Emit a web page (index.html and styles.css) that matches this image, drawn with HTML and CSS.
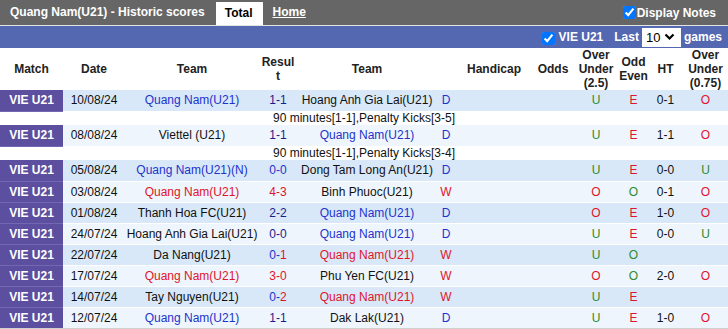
FILE: index.html
```html
<!DOCTYPE html>
<html>
<head>
<meta charset="utf-8">
<link rel="stylesheet" href="styles.css">
</head>
<body>
<div class="page">
  <div class="topbar">
    <div class="title">Quang Nam(U21) - Historic scores</div>
    <div class="tab active">Total</div>
    <a class="tab link">Home</a>
    <label class="notes"><input class="cb" type="checkbox" checked>Display Notes</label>
  </div>
  <div class="filterbar">
    <label class="league"><input class="cb" type="checkbox" checked>VIE U21</label>
    <span class="last">Last</span>
    <span class="select">10<svg class="chev" width="11" height="8" viewBox="0 0 11 8"><path d="M1.5 1.5 L5.5 5.5 L9.5 1.5" fill="none" stroke="#000" stroke-width="2.2"/></svg></span>
    <span class="games">games</span>
  </div>
  <table class="scores">
    <colgroup>
      <col class="c-match"><col class="c-date"><col class="c-team"><col class="c-res"><col class="c-team2"><col class="c-wdl"><col class="c-hc"><col class="c-odds"><col class="c-ou"><col class="c-oe"><col class="c-ht"><col class="c-ou2">
    </colgroup>
    <thead>
      <tr>
        <th>Match</th><th>Date</th><th>Team</th><th class="brk">Result</th><th>Team</th><th></th><th>Handicap</th><th>Odds</th><th>Over Under (2.5)</th><th>Odd Even</th><th>HT</th><th>Over Under (0.75)</th>
      </tr>
    </thead>
    <tbody>
      <tr class="r a">
        <td class="lg">VIE U21</td><td>10/08/24</td><td class="bl">Quang Nam(U21)</td><td class="dk">1-1</td><td>Hoang Anh Gia Lai(U21)</td><td class="bl">D</td><td></td><td></td><td class="gr">U</td><td class="rd">E</td><td>0-1</td><td class="rd">O</td>
      </tr>
      <tr class="note"><td colspan="12">90 minutes[1-1],Penalty Kicks[3-5]</td></tr>
      <tr class="r b">
        <td class="lg">VIE U21</td><td>08/08/24</td><td>Viettel (U21)</td><td class="dk">1-1</td><td class="bl">Quang Nam(U21)</td><td class="bl">D</td><td></td><td></td><td class="gr">U</td><td class="rd">E</td><td>1-1</td><td class="rd">O</td>
      </tr>
      <tr class="note"><td colspan="12">90 minutes[1-1],Penalty Kicks[3-4]</td></tr>
      <tr class="r a">
        <td class="lg">VIE U21</td><td>05/08/24</td><td class="bl">Quang Nam(U21)(N)</td><td class="bl">0-0</td><td>Dong Tam Long An(U21)</td><td class="bl">D</td><td></td><td></td><td class="gr">U</td><td class="rd">E</td><td>0-0</td><td class="gr">U</td>
      </tr>
      <tr class="r b">
        <td class="lg">VIE U21</td><td>03/08/24</td><td class="rd">Quang Nam(U21)</td><td class="rd">4-3</td><td>Binh Phuoc(U21)</td><td class="rd">W</td><td></td><td></td><td class="rd">O</td><td class="gr">O</td><td>0-1</td><td class="rd">O</td>
      </tr>
      <tr class="r a">
        <td class="lg">VIE U21</td><td>01/08/24</td><td>Thanh Hoa FC(U21)</td><td class="dk">2-2</td><td class="bl">Quang Nam(U21)</td><td class="bl">D</td><td></td><td></td><td class="rd">O</td><td class="rd">E</td><td>1-0</td><td class="rd">O</td>
      </tr>
      <tr class="r b">
        <td class="lg">VIE U21</td><td>24/07/24</td><td>Hoang Anh Gia Lai(U21)</td><td class="dk">0-0</td><td class="bl">Quang Nam(U21)</td><td class="bl">D</td><td></td><td></td><td class="gr">U</td><td class="rd">E</td><td>0-0</td><td class="gr">U</td>
      </tr>
      <tr class="r a">
        <td class="lg">VIE U21</td><td>22/07/24</td><td>Da Nang(U21)</td><td class="bl">0-<span class="rd">1</span></td><td class="rd">Quang Nam(U21)</td><td class="rd">W</td><td></td><td></td><td class="gr">U</td><td class="gr">O</td><td></td><td></td>
      </tr>
      <tr class="r b">
        <td class="lg">VIE U21</td><td>17/07/24</td><td class="rd">Quang Nam(U21)</td><td class="rd">3-0</td><td>Phu Yen FC(U21)</td><td class="rd">W</td><td></td><td></td><td class="rd">O</td><td class="gr">O</td><td>2-0</td><td class="rd">O</td>
      </tr>
      <tr class="r a">
        <td class="lg">VIE U21</td><td>14/07/24</td><td>Tay Nguyen(U21)</td><td class="bl">0-<span class="rd">2</span></td><td class="rd">Quang Nam(U21)</td><td class="rd">W</td><td></td><td></td><td class="gr">U</td><td class="rd">E</td><td></td><td></td>
      </tr>
      <tr class="r b last">
        <td class="lg">VIE U21</td><td>12/07/24</td><td class="bl">Quang Nam(U21)</td><td class="dk">1-1</td><td>Dak Lak(U21)</td><td class="bl">D</td><td></td><td></td><td class="gr">U</td><td class="rd">E</td><td>1-0</td><td class="rd">O</td>
      </tr>
    </tbody>
  </table>
</div>
</body>
</html>
```

FILE: styles.css
```css
* { box-sizing: border-box; }
html, body { margin: 0; padding: 0; background: #fff; }
body {
  font-family: "Liberation Sans", Arial, sans-serif;
  font-size: 12px;
  color: #111;
}
.page { width: 728px; }

.topbar {
  height: 26px;
  background: #666;
  border-bottom: 1px solid #e4e4e4;
  display: flex;
  align-items: stretch;
}
.title {
  color: #fff;
  font-weight: bold;
  padding-left: 10px;
  line-height: 25px;
}
.tab {
  font-weight: bold;
  line-height: 23px;
}
.tab.active {
  margin-left: 11px;
  margin-top: 2px;
  padding: 0 10px 0 9px;
  background: #fff;
  color: #000;
}
.tab.link {
  color: #fff;
  text-decoration: underline;
  padding: 0 10px;
  line-height: 25px;
}
.notes {
  margin-left: auto;
  padding-right: 12px;
  display: flex;
  align-items: center;
  color: #fff;
  font-weight: bold;
}
.cb {
  width: 13px;
  height: 13px;
  margin: 0 1px 0 0;
  accent-color: #0075ff;
}

.filterbar {
  height: 22px;
  background: #5467b1;
  display: flex;
  align-items: center;
  justify-content: flex-end;
  padding-right: 6px;
  color: #fff;
  font-weight: bold;
}
.league { display: flex; align-items: center; }
.league .cb { margin-right: 4px; margin-top: 2px; }
.last { margin-left: 11px; }
.select {
  margin-left: 3px;
  width: 39px;
  height: 19px;
  background: #fff;
  color: #000;
  font-weight: normal;
  font-size: 13px;
  display: flex;
  align-items: center;
  padding-left: 4px;
  gap: 4px;
}
.chev { display: block; }
.games { margin-left: 3px; }

.scores {
  width: 728px;
  border-collapse: collapse;
  table-layout: fixed;
}
.c-match { width: 63px; }
.c-date { width: 62px; }
.c-team { width: 134px; }
.c-res { width: 38px; }
.c-team2 { width: 140px; }
.c-wdl { width: 18px; }
.c-hc { width: 78px; }
.c-odds { width: 40px; }
.c-ou { width: 46px; }
.c-oe { width: 29px; }
.c-ht { width: 35px; }
.c-ou2 { width: 45px; }

.scores th {
  height: 42px;
  padding: 0;
  line-height: 14px;
  font-weight: bold;
  color: #222;
  text-align: center;
  vertical-align: middle;
}
.scores th.brk { word-break: break-all; padding: 0 2px; }

.scores td {
  padding: 0;
  height: 21px;
  text-align: center;
  vertical-align: middle;
  white-space: nowrap;
  overflow: hidden;
  border-bottom: 1px solid #fff;
}
.r.a td { background: #d8e8f8; }
.r.b td { background: #eef5fc; }
.r td.lg {
  background: #5c4f9f;
  color: #fff;
  font-weight: bold;
  border-bottom: 1px solid #7267b0;
}
.note td {
  height: 14px;
  line-height: 13px;
  background: #fff;
  border-bottom: 0;
}
.r.last td { border-bottom: 1px solid #cfcfcf; }

.bl { color: #2233cc; }
.rd { color: #e0142b; }
.gr { color: #2e8b2e; }
.dk { color: #1c1c8c; }
```
